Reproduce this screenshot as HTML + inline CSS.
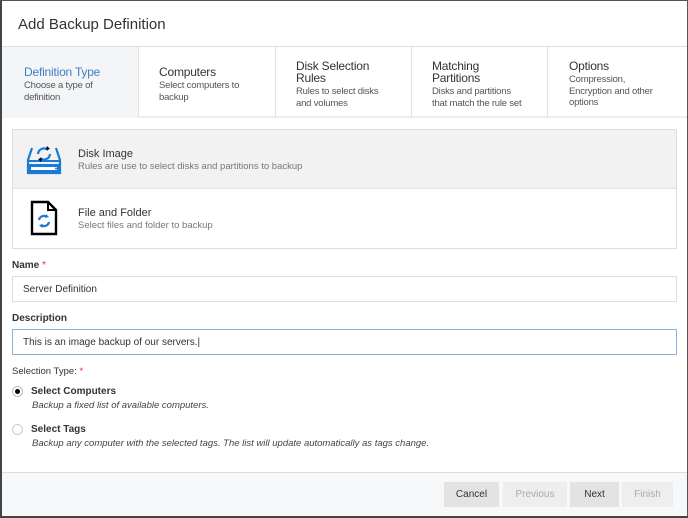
<!DOCTYPE html><html><head><style>
*{box-sizing:border-box;margin:0;padding:0}
body{width:688px;height:518px;overflow:hidden;font-family:"Liberation Sans",sans-serif;background:#fff;position:relative;color:#333}
.frame{position:absolute;inset:0;border:1px solid #555;border-left:2px solid #444;border-bottom:2px solid #444}
.abs{position:absolute}
.step{position:absolute;top:47px;height:71px;border-right:1px solid #e3e3e3;padding:18px 0 0 22px}
.step h4{font-weight:normal;font-size:12px;color:#333;line-height:12px;letter-spacing:-0.2px}
.step p{font-size:9.5px;color:#555;line-height:11.5px;margin-top:2px;letter-spacing:-0.2px}
.lbl{position:absolute;left:12px;font-size:10px;font-weight:bold;color:#333}
.inp{position:absolute;left:12px;width:665px;height:26px;border:1px solid #ddd;font-size:10px;padding:7px 10px;color:#333}
.btn{position:absolute;top:482px;height:25px;font-size:10px;text-align:center;line-height:25px}
</style></head><body>
<div class="abs" style="left:18px;top:16px;font-size:15px;color:#333">Add Backup Definition</div>
<div class="abs" style="left:0;top:46px;width:688px;height:1px;background:#ddd"></div>
<div class="abs" style="left:0;top:47px;width:688px;height:71px;border-bottom:2px solid #eee"></div>
<div class="step" style="left:2px;width:137px;background:#f4f5f7;padding-top:19px"><h4 style="color:#3d7fc6">Definition Type</h4><p>Choose a type of<br>definition</p></div>
<div class="step" style="left:139px;width:137px;padding-left:20px;padding-top:19px"><h4>Computers</h4><p>Select computers to<br>backup</p></div>
<div class="step" style="left:276px;width:136px;padding-top:13px;padding-left:20px"><h4>Disk Selection<br>Rules</h4><p>Rules to select disks<br>and volumes</p></div>
<div class="step" style="left:412px;width:136px;padding-top:13px;padding-left:20px"><h4>Matching<br>Partitions</h4><p>Disks and partitions<br>that match the rule set</p></div>
<div class="step" style="left:548px;width:140px;border:none;padding-top:13px;padding-left:21px"><h4>Options</h4><p>Compression,<br>Encryption and other<br>options</p></div>
<div class="abs" style="left:12px;top:129px;width:665px;height:120px;border:1px solid #ddd"></div>
<div class="abs" style="left:13px;top:130px;width:663px;height:59px;background:#f2f2f2;border-bottom:1px solid #e3e3e3"></div>
<svg class="abs" style="left:26px;top:140px" width="36" height="36" viewBox="0 0 36 36"><path d="M6 8 L2 20 V33 H20 H34 V20 L30 8" fill="none" stroke="#1a7ad4" stroke-width="2.2"/><path d="M2 21 H34" stroke="#1a7ad4" stroke-width="2"/><rect x="2" y="24" width="32" height="9" fill="#1a7ad4"/><rect x="5" y="27" width="26" height="3" fill="#fff"/><circle cx="30" cy="28.5" r="1" fill="#1a7ad4"/><path d="M12 14 a6 6 0 0 1 10 -4" fill="none" stroke="#1a7ad4" stroke-width="2.2"/><path d="M21 6 l3 3 -4 1z" fill="#000"/><path d="M24 14 a6 6 0 0 1 -10 4" fill="none" stroke="#1a7ad4" stroke-width="2.2"/><path d="M15 22 l-3 -3 4 -1z" fill="#000"/></svg>
<div class="abs" style="left:78px;top:148px;font-size:11px;color:#333">Disk Image</div>
<div class="abs" style="left:78px;top:161px;font-size:9.5px;color:#777">Rules are use to select disks and partitions to backup</div>
<svg class="abs" style="left:30px;top:200px" width="30" height="36" viewBox="0 0 30 36"><path d="M2 2 H18 L26 10 V34 H2 Z" fill="#fff" stroke="#000" stroke-width="2.4"/><path d="M18 2 V10 H26" fill="none" stroke="#000" stroke-width="2"/><path d="M9 20 a5 5 0 0 1 8 -3" fill="none" stroke="#1a7ad4" stroke-width="2.2"/><path d="M16 14 l3 3 -4 1z" fill="#1a7ad4"/><path d="M19 22 a5 5 0 0 1 -8 3" fill="none" stroke="#1a7ad4" stroke-width="2.2"/><path d="M12 28 l-3 -3 4 -1z" fill="#1a7ad4"/></svg>
<div class="abs" style="left:78px;top:207px;font-size:11px;color:#333">File and Folder</div>
<div class="abs" style="left:78px;top:220px;font-size:9.5px;color:#777">Select files and folder to backup</div>
<div class="lbl" style="top:260px">Name <span style="color:#d33;font-weight:normal">*</span></div>
<div class="inp" style="top:276px">Server Definition</div>
<div class="lbl" style="top:313px">Description</div>
<div class="inp" style="top:329px;border-color:#8ab4e0">This is an image backup of our servers.|</div>
<div class="lbl" style="top:366px;font-weight:normal;font-size:9.5px">Selection Type: <span style="color:#d33">*</span></div>
<div class="abs" style="left:12px;top:386px;width:11px;height:11px;border:1px solid #bbb;border-radius:50%;background:#fff"><div style="width:5px;height:5px;border-radius:50%;background:#000;margin:2px"></div></div>
<div class="abs" style="left:31px;top:386px;font-size:10px;font-weight:bold;color:#333">Select Computers</div>
<div class="abs" style="left:32px;top:400px;font-size:9.5px;font-style:italic;color:#444">Backup a fixed list of available computers.</div>
<div class="abs" style="left:12px;top:424px;width:11px;height:11px;border:1px solid #ccc;border-radius:50%"></div>
<div class="abs" style="left:31px;top:424px;font-size:10px;font-weight:bold;color:#333">Select Tags</div>
<div class="abs" style="left:32px;top:438px;font-size:9.5px;font-style:italic;color:#444">Backup any computer with the selected tags. The list will update automatically as tags change.</div>
<div class="abs" style="left:0;top:472px;width:688px;height:46px;background:#f7f8fa;border-top:1px solid #ddd"></div>
<div class="btn" style="left:444px;width:55px;background:#e3e3e3;color:#333">Cancel</div>
<div class="btn" style="left:503px;width:64px;background:#eeeeee;color:#aaa">Previous</div>
<div class="btn" style="left:570px;width:49px;background:#e3e3e3;color:#333">Next</div>
<div class="btn" style="left:622px;width:51px;background:#eeeeee;color:#aaa">Finish</div>
<div class="frame"></div>
</body></html>
